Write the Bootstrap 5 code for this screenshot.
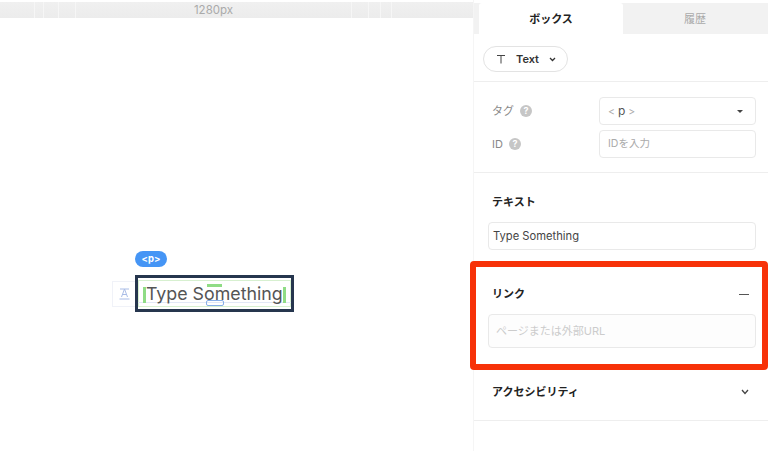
<!DOCTYPE html>
<html lang="ja">
<head>
<meta charset="utf-8">
<title>Text</title>
<link href="https://cdn.jsdelivr.net/npm/bootstrap@5.3.0/dist/css/bootstrap.min.css" rel="stylesheet">
<style>
html,body{height:100%;margin:0;overflow:hidden;background:#fff}
body{font-family:Inter,"Noto Sans CJK JP",sans-serif;color:#222;width:768px;height:451px;position:relative}
.stage{width:768px;height:451px}
.canvas-side{width:473px;height:451px;position:relative;flex:none}
.ruler{margin-top:2px;height:16px;background:linear-gradient(#f0f0f0,#ececec);font-size:11.5px;color:#aaa;text-align:center;line-height:17px;position:relative;padding-right:46px}
.tick{position:absolute;top:0;bottom:0;width:1px;background:#f6f6f6}
.panel{width:295px;height:451px;flex:none;border-left:1px solid #f5f5f5;padding-top:3px}
.tabbar{height:31px;background:#f2f2f2;padding-left:5px}
.tab-on,.tab-off{width:144px;height:31px;font-size:11px;line-height:32px;text-align:center;flex:none}
.tab-on{background:#fff;font-weight:600;color:#222;border-radius:3px 3px 0 0}
.tab-off{color:#aaa}
.type-sec{height:48px;border-bottom:1px solid #eee;padding:12px 0 0 9px}
.type-pill{width:85px;height:26px;border:1px solid #e3e3e3;border-radius:13px;font-size:11px;font-weight:600;padding-left:12px;gap:10px;color:#333}
.meta-sec{height:91px;border-bottom:1px solid #eee;padding:15px 12px 0 18px}
.meta-row{height:28px;margin-bottom:5px}
.meta-label{width:107px;font-size:11px;color:#888;gap:6px;flex:none}
.help{width:12px;height:12px;border-radius:50%;background:#c6c6c6;color:#fff;font-size:9px;font-weight:700;line-height:12px;text-align:center;display:inline-block}
.field{border:1px solid #e9e9e9;border-radius:4px;font-size:10.5px;color:#aaa;padding:0 8px;background:#fff}
.meta-field{width:157px;height:28px}
.meta-row .sel-val b{font-weight:400;color:#555;font-size:12px}
.caret{width:0;height:0;border-left:3px solid transparent;border-right:3px solid transparent;border-top:3.5px solid #444}
.text-sec{height:88px;padding:21px 12px 0 14px}
.sec-title{font-size:11px;font-weight:700;color:#222;padding-left:4px;line-height:16px}
.wide-field{height:28px;margin-top:12px;color:#444;font-size:11.200px;padding:0 4px}
.link-sec{height:110px;padding:25px 12px 0 14px}
.link-head{height:16px;padding-right:7px}
.dash{width:10px;height:1px;background:#555;flex:none}
.link-field{height:34px;margin-top:12px;color:#ccc;font-size:11px;padding:0 7px;background:#fdfdfd}
.acc-sec{height:50px;padding:13px 12px 0 14px;border-bottom:1px solid #eee}
.redbox{position:absolute;left:470px;top:261px;width:298px;height:109px;border:6px solid #f73208;border-radius:4px}
.ptag{position:absolute;left:135px;top:251px;width:32px;height:16px;border-radius:8px;background:#4595f5;color:#fff;font-size:9.5px;font-weight:700;text-align:center;line-height:15px}
.side-icon{position:absolute;left:112px;top:281px;width:24px;height:26px;border:1px solid #f0f2f8;color:#a9bce6}
.selbox{position:absolute;left:135px;top:275px;width:159px;height:37px;border:3px solid #26364e;font-size:17.800px;line-height:32px;color:#555;padding-left:8px;white-space:nowrap}
.g-inner{position:absolute;left:0;right:0;top:2px;bottom:2px;border:1px solid #d7f0d0}
.g-l,.g-r{position:absolute;top:9px;width:3px;height:16px;background:#8fdc85}
.g-l{left:5px}.g-r{right:5px}
.g-t{position:absolute;left:69px;top:6px;width:15px;height:3px;background:#8fdc85}
.g-b{position:absolute;left:68px;top:22px;width:18px;height:6px;border:1px solid #86aee8;border-radius:2px}
.g-h{position:absolute;left:0;right:0;top:24px;height:1px;background:#e2e8f6}
.seltext{position:relative}
</style>
</head>
<body>
<div class="stage d-flex">
  <div class="canvas-side">
    <div class="ruler">
      <span class="tick" style="left:34px"></span><span class="tick" style="left:43px"></span><span class="tick" style="left:58px"></span><span class="tick" style="left:75px"></span>
      <span class="tick" style="left:351px"></span><span class="tick" style="left:368px"></span><span class="tick" style="left:380px"></span><span class="tick" style="left:391px"></span>
      1280px
    </div>
    <div class="ptag">&lt;p&gt;</div>
    <div class="side-icon d-flex align-items-center justify-content-center">
      <svg width="11" height="12" viewBox="0 0 11 12" fill="none" stroke="#a9bce6" stroke-width="1"><path d="M1 1h9M5.5 1L2.5 9M5.5 1l3 8M3.5 6.5h4M0.5 11h10"/></svg>
    </div>
    <div class="selbox">
      <span class="g-inner"></span><span class="g-h"></span><span class="g-l"></span><span class="g-r"></span><span class="g-t"></span><span class="g-b"></span>
      <span class="seltext">Type Something</span>
    </div>
  </div>
  <div class="panel">
    <div class="tabbar d-flex">
      <div class="tab-on">ボックス</div>
      <div class="tab-off">履歴</div>
    </div>
    <div class="type-sec">
      <div class="type-pill d-flex align-items-center">
        <svg width="10" height="10" viewBox="0 0 10 10" fill="none" stroke="#444" stroke-width="1"><path d="M1 1.5h8M5 1.5V9.500"/></svg>
        <span>Text</span>
        <svg width="7" height="5" viewBox="0 0 7 5" fill="none" stroke="#333" stroke-width="1.300"><path d="M1 1l2.500 2.500L6 1"/></svg>
      </div>
    </div>
    <div class="meta-sec">
      <div class="meta-row d-flex align-items-center">
        <div class="meta-label d-flex align-items-center"><span>タグ</span><span class="help">?</span></div>
        <div class="field meta-field sel-val d-flex align-items-center justify-content-between"><span>&lt; <b>p</b> &gt;</span><span class="caret me-1"></span></div>
      </div>
      <div class="meta-row d-flex align-items-center">
        <div class="meta-label d-flex align-items-center"><span>ID</span><span class="help">?</span></div>
        <div class="field meta-field d-flex align-items-center">IDを入力</div>
      </div>
    </div>
    <div class="text-sec">
      <div class="sec-title">テキスト</div>
      <div class="field wide-field d-flex align-items-center">Type Something</div>
    </div>
    <div class="link-sec">
      <div class="link-head d-flex align-items-center justify-content-between">
        <div class="sec-title">リンク</div>
        <span class="dash"></span>
      </div>
      <div class="field link-field d-flex align-items-center">ページまたは外部URL</div>
    </div>
    <div class="acc-sec">
      <div class="link-head d-flex align-items-center justify-content-between">
        <div class="sec-title">アクセシビリティ</div>
        <svg width="8" height="6" viewBox="0 0 8 6" fill="none" stroke="#444" stroke-width="1.300"><path d="M1 1l3 3.500L7 1"/></svg>
      </div>
    </div>
  </div>
</div>
<div class="redbox"></div>
</body>
</html>
